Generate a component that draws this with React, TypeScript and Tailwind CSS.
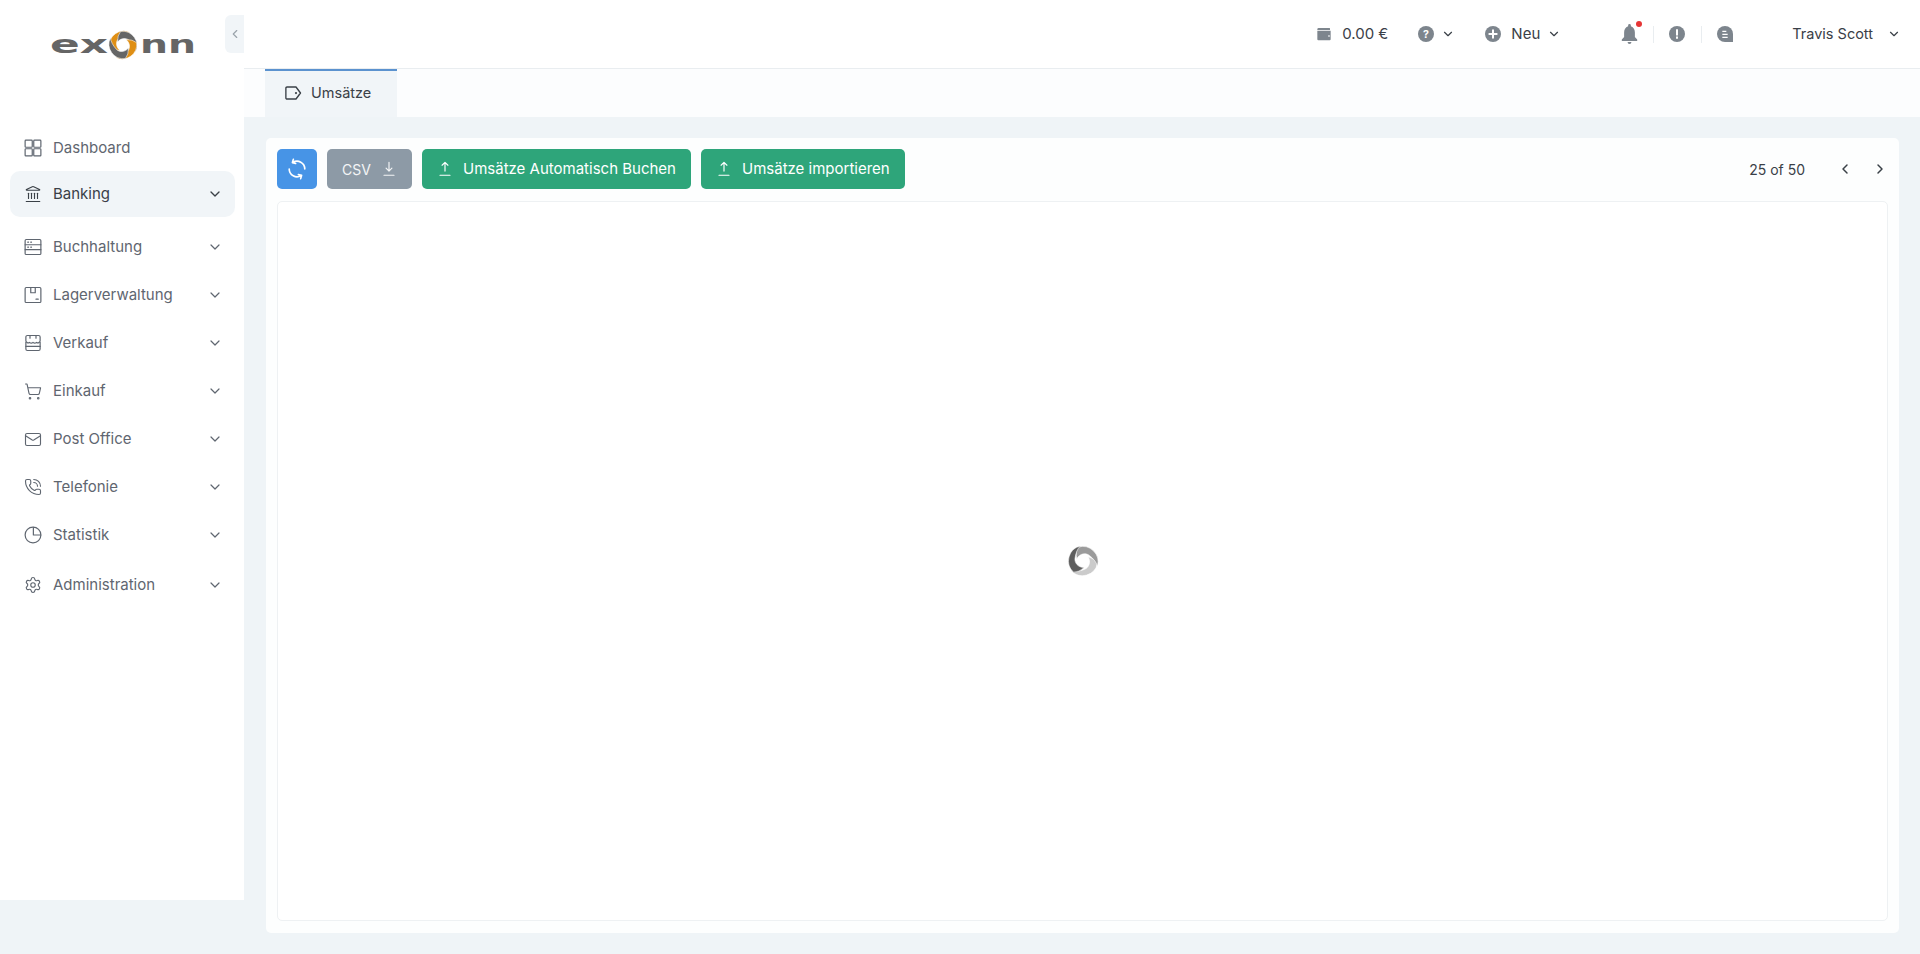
import { ChevronDown, ChevronLeft, ChevronRight, Landmark, Mail, PhoneCall, Settings, ShoppingCart } from "lucide-react";
import type { ReactNode } from "react";

function Icon({ children, size = 18 }: { children: ReactNode; size?: number }) {
    return (
        <svg width={size} height={size} viewBox="0 0 24 24" fill="none" stroke="currentColor" strokeWidth="1.6" strokeLinecap="round" strokeLinejoin="round" className="shrink-0">
            {children}
        </svg>
    );
}

const DashboardIcon = () => (
    <Icon>
        <rect x="1.500" y="1.500" width="9.500" height="9.500" rx="1" />
        <rect x="13" y="1.500" width="9.500" height="9.500" rx="1" />
        <rect x="1.500" y="13" width="9.500" height="9.500" rx="1" />
        <rect x="13" y="13" width="9.500" height="9.500" rx="1" />
    </Icon>
);

const LedgerIcon = () => (
    <Icon>
        <rect x="1.500" y="2" width="21" height="20" rx="1.500" />
        <path d="M1.500 9h21M1.500 15.500h21M5 5.600h1M9 5.600h1M5 12.200h1M9 12.200h1" />
    </Icon>
);

const BoxIcon = () => (
    <Icon>
        <rect x="1.500" y="2" width="21" height="20" rx="1.500" />
        <path d="M9 2.500v6.500h6V2.500M16 17.500h3" />
    </Icon>
);

const StoreIcon = () => (
    <Icon>
        <path d="M4.500 2h15A2 2 0 0 1 21.500 4v5a3 3 0 0 1-4.800 2.200 3.600 3.600 0 0 1-4.700 0 3.600 3.600 0 0 1-4.700 0A3 3 0 0 1 2.500 9V4A2 2 0 0 1 4.500 2z" />
        <path d="M8 2.500v3M16 2.500v3M2.500 11v9A2 2 0 0 0 4.500 22h15a2 2 0 0 0 2-2v-9" />
        <path d="M2.500 16.500h19" />
    </Icon>
);

const StatIcon = () => (
    <Icon>
        <circle cx="12" cy="12" r="10.500" />
        <path d="M12.500 1.800V12h9.800" />
    </Icon>
);

const navItems = [
    { label: "Buchhaltung", icon: <LedgerIcon />, cls: "h-[48px] mt-[6px]" },
    { label: "Lagerverwaltung", icon: <BoxIcon />, cls: "h-[48px]" },
    { label: "Verkauf", icon: <StoreIcon />, cls: "h-[48px]" },
    { label: "Einkauf", icon: <ShoppingCart size={19} strokeWidth={1.5} />, cls: "h-[48px]" },
    { label: "Post Office", icon: <Mail size={19} strokeWidth={1.5} />, cls: "h-[48px]" },
    { label: "Telefonie", icon: <PhoneCall size={18} strokeWidth={1.5} />, cls: "h-[48px]" },
    { label: "Statistik", icon: <StatIcon />, cls: "h-[48px]" },
    { label: "Administration", icon: <Settings size={18} strokeWidth={1.5} />, cls: "h-[50px] mt-[1px]" },
];

// swirl blade: thin tip on the right, sweeping over the top into a tail near the centre
const blade = "M23.300 10A11.500 11.500 0 0 0 3.600 4.900Q3.500 9 7.100 12.900C7 8 11 5.500 14 6C18 6.500 21.500 8 23.300 10z";

function Logo() {
    return (
        <svg width="150" height="34" viewBox="0 0 150 34">
            <text x="2" y="24" fontFamily="'DejaVu Sans', sans-serif" fontWeight="700" fontSize="25" fill="#656565" textLength="58" lengthAdjust="spacingAndGlyphs">ex</text>
            <g transform="translate(60 1) scale(1.25)" stroke="#fff" strokeWidth=".4">
                <path d={blade} fill="#df8f15" transform="rotate(-50 12 12)" />
                <path d={blade} fill="#666666" transform="rotate(40 12 12)" />
                <path d={blade} fill="#df8f15" transform="rotate(130 12 12)" />
                <path d={blade} fill="#666666" transform="rotate(220 12 12)" />
            </g>
            <text x="92" y="24" fontFamily="'DejaVu Sans', sans-serif" fontWeight="700" fontSize="25" fill="#656565" textLength="56" lengthAdjust="spacingAndGlyphs">nn</text>
        </svg>
    );
}

const UploadGlyph = () => (
    <Icon size={20}>
        <path d="M12 14.500V4M8.500 7.500 12 4l3.500 3.500M6 19.500h12" strokeWidth="1.400" />
    </Icon>
);

export default function App() {
    return (
        <div className="min-h-screen h-[954px] flex items-start bg-[#eff4f7] font-['Inter','Liberation_Sans',sans-serif] overflow-hidden">
            <aside className="w-[244px] h-[900px] shrink-0 bg-white relative pt-[125px]">
                <div className="absolute left-[48px] top-[29px]">
                    <Logo />
                </div>
                <button className="absolute right-0 top-[15px] w-[19px] h-[38px] rounded-l-[6px] bg-[#f1f5f8] flex items-center justify-center text-[#9aa3ab]">
                    <ChevronLeft size={14} />
                </button>

                <div className="h-[46px] pl-[24px] flex items-center gap-[11px] text-[#5f6670] text-[15px]">
                    <DashboardIcon />
                    Dashboard
                </div>
                <div className="ml-[10px] mr-[9px] h-[46px] pl-[14px] pr-[12px] rounded-[10px] bg-[#f1f5f8] flex items-center gap-[11px] text-[#3a4047] text-[15px]">
                    <Landmark size={18} strokeWidth={1.5} />
                    <span className="flex-1">Banking</span>
                    <ChevronDown size={16} strokeWidth={2} />
                </div>

                {navItems.map((item) => (
                    <div key={item.label} className={`${item.cls} pl-[24px] pr-[21px] flex items-center gap-[11px] text-[#5f6670] text-[15px]`}>
                        <span className="w-[18px] flex justify-center">{item.icon}</span>
                        <span className="flex-1">{item.label}</span>
                        <ChevronDown size={16} strokeWidth={1.800} />
                    </div>
                ))}
            </aside>

            <main className="flex-1 min-w-0">
                <header className="h-[69px] bg-white border-b border-[#e9edf0] flex items-center justify-end text-[#3a4047] text-[14.500px] pr-[19px]">
                    <svg width="16" height="16" viewBox="0 0 24 24" fill="#7d858d">
                        <path d="M2 5a2 2 0 0 1 2-2h16l1 .5V6H2zM2 7h20v13a1.500 1.500 0 0 1-1.500 1.500h-17A1.500 1.500 0 0 1 2 20zM18.500 14v2h2v-2z" fillRule="evenodd" />
                    </svg>
                    <span className="ml-[10px] text-[15px]">0.00 €</span>
                    <svg className="ml-[30px]" width="16" height="16" viewBox="0 0 24 24">
                        <circle cx="12" cy="12" r="12" fill="#7d858d" />
                        <text x="12" y="18" textAnchor="middle" fontSize="16" fontWeight="700" fill="#fff">?</text>
                    </svg>
                    <ChevronDown className="ml-[7px]" size={14} />
                    <svg className="ml-[30px]" width="16" height="16" viewBox="0 0 24 24">
                        <circle cx="12" cy="12" r="12" fill="#7d858d" />
                        <path d="M12 6.500v11M6.500 12h11" stroke="#fff" strokeWidth="3" strokeLinecap="round" />
                    </svg>
                    <span className="ml-[10px] text-[15px]">Neu</span>
                    <ChevronDown className="ml-[7px]" size={14} />

                    <div className="ml-[60px] mr-[1px] relative w-[16px] flex justify-center">
                        <svg width="19" height="20" viewBox="0 0 24 26" fill="#7d858d" className="shrink-0">
                            <path d="M12 0a1.800 1.800 0 0 1 1.800 1.800v1.200C17.500 4.300 19 7.500 19 11v6l3 3v2H2v-2l3-3v-6c0-3.500 1.500-6.700 5.200-8V1.800A1.800 1.800 0 0 1 12 0zM9.500 23.500h5a2.500 2.500 0 0 1-5 0z" />
                        </svg>
                        <span className="absolute -top-[3px] right-[-5px] w-[6px] h-[6px] rounded-full bg-[#e63535]" />
                    </div>
                    <span className="ml-[15px] w-px h-[17px] bg-[#e9edf0]" />
                    <svg className="ml-[15px]" width="16" height="16" viewBox="0 0 24 24">
                        <circle cx="12" cy="12" r="12" fill="#7d858d" />
                        <path d="M12 6v7M12 17v1" stroke="#fff" strokeWidth="3" strokeLinecap="round" />
                    </svg>
                    <span className="ml-[16px] w-px h-[17px] bg-[#e9edf0]" />
                    <svg className="ml-[15px]" width="16" height="16" viewBox="0 0 24 24">
                        <path d="M12 0a12 12 0 0 1 12 12v12H12A12 12 0 0 1 12 0z" fill="#7d858d" />
                        <path d="M8 8h6M8 12.500h8M8 17h8" stroke="#fff" strokeWidth="2" />
                    </svg>
                    <span className="ml-[59px]">Travis Scott</span>
                    <ChevronDown className="ml-[14px]" size={14} />
                </header>

                <div className="h-[48px] bg-[#fcfdfe] pl-[21px]">
                    <div className="w-[132px] h-[48px] bg-[#f1f5f8] border-t-2 border-[#5b92cf] pb-[2px] flex items-center pl-[19px] gap-[9px] text-[#3a4047] text-[14.500px]">
                        <svg width="18" height="18" viewBox="0 0 24 24" fill="none" stroke="currentColor" strokeWidth="1.800" strokeLinejoin="round">
                            <path d="M4 4h12l6 8-6 8H4a1.500 1.500 0 0 1-1.500-1.500v-13A1.500 1.500 0 0 1 4 4z" />
                            <circle cx="16" cy="12" r=".6" />
                        </svg>
                        Umsätze
                    </div>
                </div>

                <section className="mt-[21px] ml-[22px] mr-[21px] h-[795px] bg-[#fdfefe] rounded-[5px] pl-[11px] pr-[11px] pt-[11px] pb-[12px] flex flex-col">
                    <div className="flex items-center h-[40px] gap-[10px]">
                        <button className="w-[40px] h-[40px] rounded-[5px] bg-[#4794e6] text-white flex items-center justify-center">
                            <svg width="22" height="22" viewBox="0 0 24 24" fill="none" stroke="currentColor" strokeWidth="1.800" strokeLinecap="round" strokeLinejoin="round">
                                <path d="M20.500 12A8.500 8.500 0 0 0 7.500 4.800M8 1.500 7 5l3.500 1" />
                                <path d="M3.500 12A8.500 8.500 0 0 0 16.500 19.200M16 22.500l1-3.500-3.500-1" />
                            </svg>
                        </button>
                        <button className="w-[85px] h-[40px] rounded-[5px] bg-[#8d9aa6] text-white/90 flex items-center pl-[15px] gap-[8px] text-[14px]">
                            CSV
                            <Icon size={20}>
                                <path d="M12 4v10.500M8.500 11 12 14.500 15.500 11M6 19.500h12" strokeWidth="1.400" />
                            </Icon>
                        </button>
                        <button className="w-[269px] h-[40px] pl-[13px] flex items-center gap-[8px] rounded-[5px] bg-[#2ea57a] text-white text-[15px]">
                            <UploadGlyph />
                            Umsätze Automatisch Buchen
                        </button>
                        <button className="w-[204px] h-[40px] pl-[13px] flex items-center gap-[8px] rounded-[5px] bg-[#2ea57a] text-white text-[15px]">
                            <UploadGlyph />
                            Umsätze importieren
                        </button>
                        <div className="ml-auto flex items-center text-[#3a4047] text-[14px]">
                            25 of 50
                            <ChevronLeft className="ml-[32px]" size={16} strokeWidth={2.200} />
                            <ChevronRight className="ml-[19px]" size={16} strokeWidth={2.200} />
                        </div>
                    </div>

                    <div className="mt-[12px] flex-1 rounded-[5px] bg-white border border-[#eef1f3] flex items-center justify-center">
                        <svg width="32" height="32" viewBox="0 0 24 24" stroke="#fff" strokeWidth=".4">
                            <path d={blade} fill="#cbcbcb" transform="rotate(150 12 12)" />
                            <path d={blade} fill="#9b9b9b" transform="rotate(30 12 12)" />
                            <path d={blade} fill="#5e5e5e" transform="rotate(-90 12 12)" />
                        </svg>
                    </div>
                </section>
            </main>
        </div>
    );
}
